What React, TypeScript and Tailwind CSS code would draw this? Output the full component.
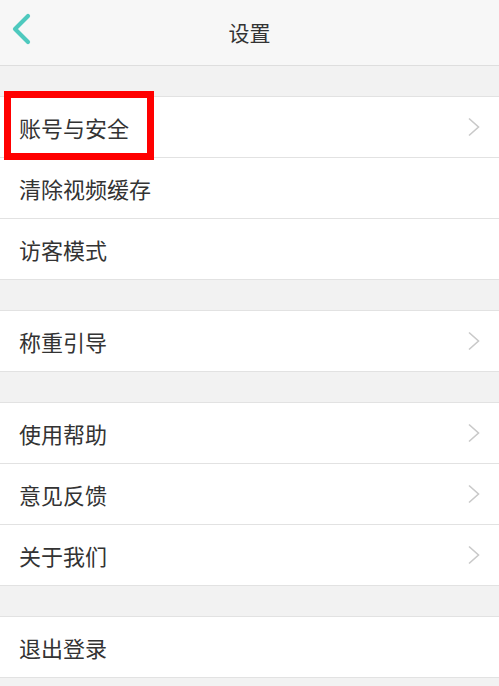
const groups: { label: string; arrow: boolean }[][] = [
  [
    { label: "账号与安全", arrow: true },
    { label: "清除视频缓存", arrow: false },
    { label: "访客模式", arrow: false },
  ],
  [{ label: "称重引导", arrow: true }],
  [
    { label: "使用帮助", arrow: true },
    { label: "意见反馈", arrow: true },
    { label: "关于我们", arrow: true },
  ],
  [{ label: "退出登录", arrow: false }],
];

function Chevron() {
  return (
    <svg width="14" height="20" viewBox="0 0 14 20" fill="none" className="shrink-0">
      <path d="M2 1.5 L11.5 10 L2 18.5" stroke="#c9c9c9" strokeWidth="1.6" />
    </svg>
  );
}

export default function App() {
  return (
    <div
      className="min-h-[686px] w-full bg-[#f2f2f2] text-[#333333]"
      style={{ fontFamily: '"Noto Sans CJK SC", "Noto Sans", sans-serif' }}
    >
      {/* header */}
      <header className="relative flex h-[66px] items-center justify-center border-b border-[#dedede] bg-[#f7f7f7]">
        <button className="absolute left-[10px] top-[13px] p-0">
          <svg width="22" height="32" viewBox="0 0 22 32" fill="none">
            <path d="M18 3 L5 16 L18 29" stroke="#4ec9be" strokeWidth="4.2" strokeLinecap="round" strokeLinejoin="round" />
          </svg>
        </button>
        <h1 className="text-[21px] leading-none text-[#333333]">设置</h1>
      </header>

      {groups.map((group, gi) => (
        <div key={gi} className="pt-[30px]">
          <ul className="border-y border-[#e2e2e2] bg-white">
            {group.map((item, i) => (
              <li
                key={item.label}
                className={`relative flex items-center justify-between pl-[19px] pr-[18px] ${
                  i > 0 ? "h-[61px] border-t border-[#e2e2e2]" : "h-[60px]"
                }`}
              >
                <span className="text-[22px] leading-none">{item.label}</span>
                {item.arrow && <Chevron />}
                {gi === 0 && i === 0 && (
                  <span className="pointer-events-none absolute z-10 left-[4px] top-[-6px] h-[69px] w-[150px] border-[7px] border-[#ff0000]" />
                )}
              </li>
            ))}
          </ul>
        </div>
      ))}
    </div>
  );
}
